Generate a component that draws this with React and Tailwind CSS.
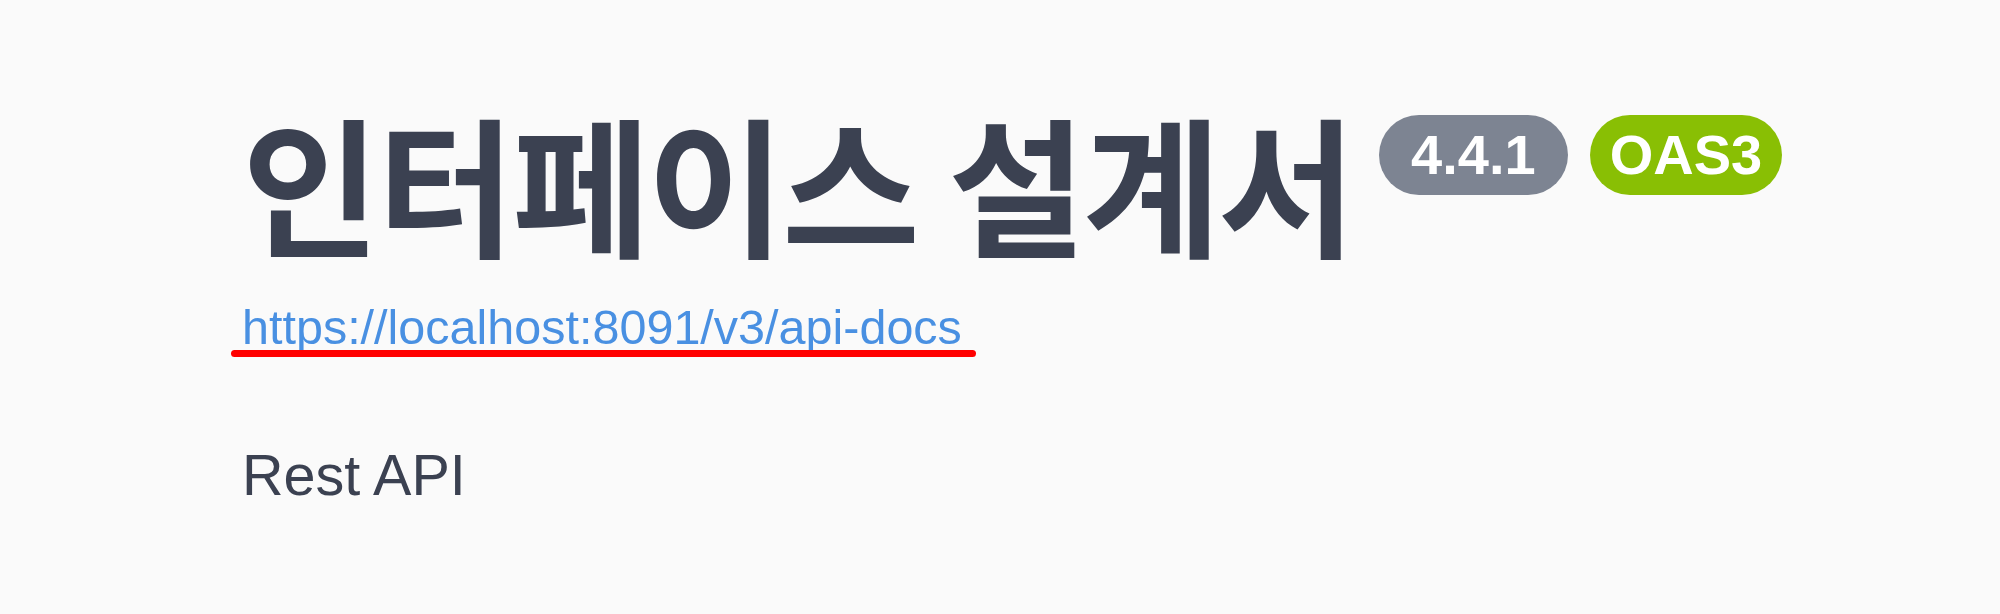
import React from 'react';

export default function App() {
  return (
    <div className="min-h-[614px] w-full bg-[#fafafa] text-[#3b4151] font-['Liberation_Sans',Arial,sans-serif]">
      <div className="pl-[242px] pt-[106px]">
        <div className="flex items-start">
          <h2 className="m-0 text-[150px] leading-[150px] font-bold tracking-[-3px] font-['Noto_Sans_CJK_KR','Liberation_Sans',sans-serif]">
            인터페이스 설계서
          </h2>
          <div className="flex items-center gap-[22px] ml-[26px] mt-[9px]">
            <span className="rounded-full bg-[#7d8492] px-[32px] py-[8px] text-[56px] leading-[64px] font-bold text-white">4.4.1</span>
            <span className="rounded-full bg-[#89bf04] px-[20px] py-[8px] text-[56px] leading-[64px] font-bold text-white">OAS3</span>
          </div>
        </div>
        <div className="mt-[44px] inline-flex flex-col">
          <a href="#" className="text-[48.5px] leading-[54px] text-[#4990e2] no-underline">https://localhost:8091/v3/api-docs</a>
          <div className="-mt-[4px] -ml-[11px] h-[7px] w-[745px] rounded-full bg-[#ff0000]" />
        </div>
        <p className="mt-[86px] text-[57.5px] leading-[64px]">Rest API</p>
      </div>
    </div>
  );
}
